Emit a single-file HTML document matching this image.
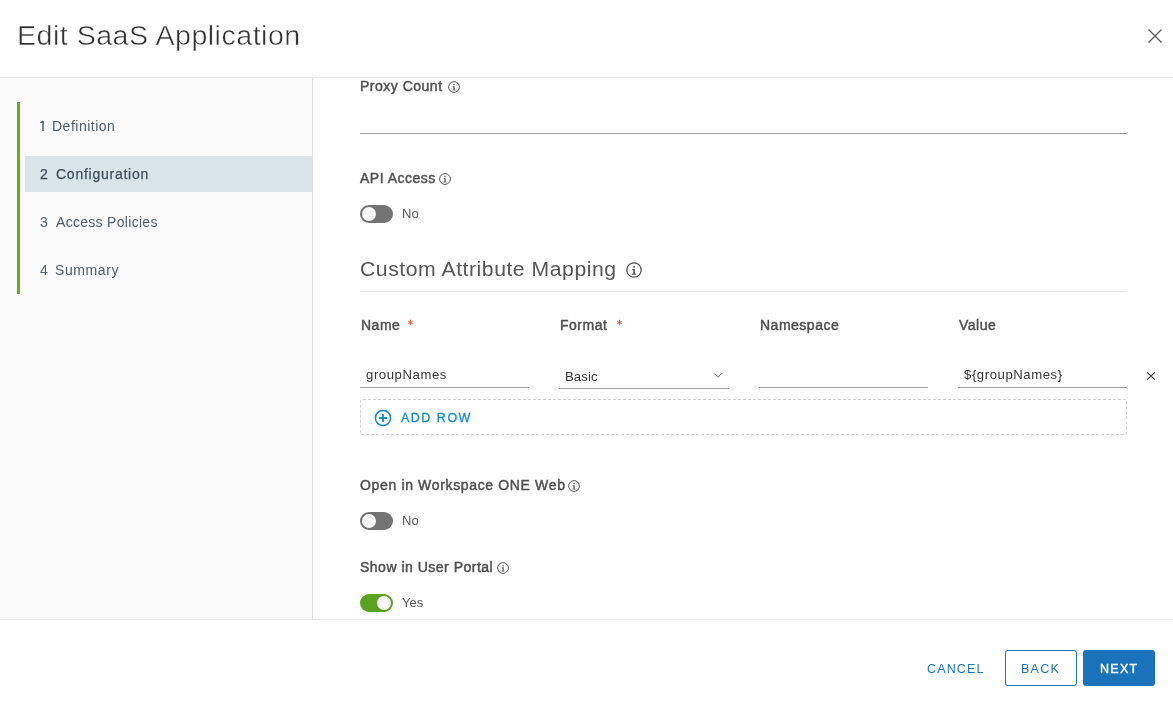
<!DOCTYPE html>
<html><head><meta charset="utf-8">
<style>
*{box-sizing:border-box;margin:0;padding:0}
html,body{width:1173px;height:706px;overflow:hidden;background:#fff;font-family:"Liberation Sans",sans-serif;position:relative}
.a{position:absolute;white-space:nowrap;will-change:transform}
#hline{left:0;top:77px;width:1173px;height:1px;background:#e8e8e8}
#title{left:17px;top:19px;font-size:27px;line-height:34px;color:#333;letter-spacing:0.45px;transform:scaleX(1.06);-webkit-text-stroke:0.45px #fff;transform-origin:0 0}
#close{left:1147px;top:28px;width:16px;height:16px}
#side{left:0;top:78px;width:312px;height:541px;background:#fafafa}
#sline{left:312px;top:78px;width:1px;height:541px;background:#dedede}
#green{left:17px;top:102px;width:3px;height:192px;background:#5fb31a}
#sel{left:25px;top:156px;width:287px;height:36px;background:#d9e4ea}
.step{font-size:14px;line-height:18px;color:#51606b}
#fline{left:0;top:619px;width:1173px;height:1px;background:#e8e9ea}
.lbl{font-size:14px;color:#4f4f4f;line-height:18px;-webkit-text-stroke:0.45px #4f4f4f;letter-spacing:0.5px}
.tog{width:33px;height:18px;border-radius:9px;background:#737373}
.tog .k{position:absolute;top:2px;left:2px;width:14px;height:14px;border-radius:50%;background:#f9f9f9}
.tog.on{background:#5aa220}
.tog.on .k{left:17px}
.tv{font-size:13px;line-height:16px;color:#565656}
.uline{height:1px;background:#9a9a9a}
.inp{font-size:12.5px;line-height:16px;color:#353535;letter-spacing:0.55px;transform:scaleX(1.05);transform-origin:0 0}
.star{font-size:12px;line-height:12px;color:#e12200}
.btn{height:36px;border-radius:3px;font-size:12.5px;letter-spacing:1.6px;text-align:center}
.bt{font-size:12.5px;line-height:16px;letter-spacing:1.6px}
</style></head><body>
<div class="a" id="title">Edit SaaS Application</div>
<svg class="a" id="close" viewBox="0 0 16 16"><path d="M1.5 1.5L14.5 14.5M14.5 1.5L1.5 14.5" stroke="#5a5a5a" stroke-width="1.3"/></svg>
<div class="a" id="hline"></div>

<div class="a" id="side"></div>
<div class="a" id="sline"></div>
<div class="a" id="green"></div>
<div class="a" id="sel"></div>
<svg class="a" style="left:38px;top:118px;width:8px;height:14px" viewBox="0 0 8 14"><path d="M5 3.2V13M2.5 4.9L5 3.1" fill="none" stroke="#51606b" stroke-width="1.45"/></svg><div class="a step" style="left:52px;top:117px;letter-spacing:0.5px">Definition</div>
<div class="a step" style="left:40px;top:165px;color:#3f4d59;-webkit-text-stroke:0.25px #3f4d59">2</div><div class="a step" style="left:56px;top:165px;color:#3f4d59;-webkit-text-stroke:0.25px #3f4d59;letter-spacing:0.75px">Configuration</div>
<div class="a step" style="left:40px;top:213px">3</div><div class="a step" style="left:56px;top:213px;letter-spacing:0.3px">Access Policies</div>
<div class="a step" style="left:40px;top:261px">4</div><div class="a step" style="left:55px;top:261px;letter-spacing:0.6px">Summary</div>

<!-- content -->
<div class="a lbl" style="left:360px;top:77px">Proxy Count</div>
<svg class="a" style="left:447.5px;top:81px;width:12px;height:12px" viewBox="0 0 16 16"><circle cx="8" cy="8" r="7.2" fill="none" stroke="#555" stroke-width="1.3"/><rect x="7.2" y="4" width="1.7" height="1.6" fill="#555"/><path d="M6.2 7h2.7v4.6h1.2v1.2H6v-1.2h1.2V8.2h-1z" fill="#555"/></svg>
<div class="a uline" style="left:360px;top:133px;width:767px"></div>

<div class="a lbl" style="left:360px;top:169px">API Access</div>
<svg class="a" style="left:439px;top:173px;width:12px;height:12px" viewBox="0 0 16 16"><circle cx="8" cy="8" r="7.2" fill="none" stroke="#555" stroke-width="1.3"/><rect x="7.2" y="4" width="1.7" height="1.6" fill="#555"/><path d="M6.2 7h2.7v4.6h1.2v1.2H6v-1.2h1.2V8.2h-1z" fill="#555"/></svg>
<div class="a tog" style="left:360px;top:205px"><div class="k"></div></div>
<div class="a tv" style="left:402px;top:206px">No</div>

<div class="a" style="left:360px;top:257px;font-size:20px;line-height:24px;color:#565656;letter-spacing:0.5px;transform:scaleX(1.06);transform-origin:0 0">Custom Attribute Mapping</div>
<svg class="a" style="left:626px;top:262px;width:16px;height:16px" viewBox="0 0 16 16"><circle cx="8" cy="8" r="7.2" fill="none" stroke="#555" stroke-width="1.3"/><rect x="7.2" y="4" width="1.7" height="1.6" fill="#555"/><path d="M6.2 7h2.7v4.6h1.2v1.2H6v-1.2h1.2V8.2h-1z" fill="#555"/></svg>
<div class="a" style="left:360px;top:291px;width:767px;height:1px;background:#e8e8e8"></div>

<div class="a lbl" style="left:361px;top:316px">Name</div><svg class="a" style="left:406.8px;top:319px;width:7px;height:7px" viewBox="0 0 7 7"><path d="M3.5 0.7V6.3M1.08 2.1L5.92 4.9M1.08 4.9L5.92 2.1" stroke="#d9532e" stroke-width="0.95"/></svg>
<div class="a lbl" style="left:560px;top:316px">Format</div><svg class="a" style="left:615.8px;top:319px;width:7px;height:7px" viewBox="0 0 7 7"><path d="M3.5 0.7V6.3M1.08 2.1L5.92 4.9M1.08 4.9L5.92 2.1" stroke="#d9532e" stroke-width="0.95"/></svg>
<div class="a lbl" style="left:760px;top:316px">Namespace</div>
<div class="a lbl" style="left:959px;top:316px">Value</div>

<div class="a inp" style="left:366px;top:366.5px">groupNames</div>
<div class="a uline" style="left:360px;top:387px;width:169px"></div>
<div class="a inp" style="left:565px;top:369px;letter-spacing:0.1px">Basic</div>
<svg class="a" style="left:713px;top:372px;width:10px;height:7px" viewBox="0 0 10 7"><path d="M1 1.2L5 5.2L9 1.2" fill="none" stroke="#666" stroke-width="0.95"/></svg>
<div class="a uline" style="left:559px;top:388px;width:170px"></div>
<div class="a uline" style="left:759px;top:387px;width:169px"></div>
<div class="a inp" style="left:964px;top:366.5px">${groupNames}</div>
<div class="a uline" style="left:958px;top:387px;width:169px"></div>
<svg class="a" style="left:1146px;top:372px;width:10px;height:8px" viewBox="0 0 10 8"><path d="M1.2 0.3L8.8 7.7M8.8 0.3L1.2 7.7" stroke="#444" stroke-width="1.15"/></svg>

<div class="a" style="left:360px;top:399px;width:767px;height:36px;border:1px dashed #cfcfcf;border-radius:3px"></div>
<svg class="a" style="left:374px;top:409px;width:18px;height:18px" viewBox="0 0 18 18"><circle cx="9" cy="9" r="7.6" fill="none" stroke="#0f8ad0" stroke-width="1.5"/><path d="M9 5v8M5 9h8" stroke="#0f8ad0" stroke-width="1.8"/></svg>
<div class="a bt" style="left:401px;top:410px;color:#0f8ad0;letter-spacing:1.5px;-webkit-text-stroke:0.3px #0f8ad0">ADD ROW</div>

<div class="a lbl" style="left:360px;top:476px;letter-spacing:0.65px">Open in Workspace ONE Web</div>
<svg class="a" style="left:568px;top:480px;width:12px;height:12px" viewBox="0 0 16 16"><circle cx="8" cy="8" r="7.2" fill="none" stroke="#555" stroke-width="1.3"/><rect x="7.2" y="4" width="1.7" height="1.6" fill="#555"/><path d="M6.2 7h2.7v4.6h1.2v1.2H6v-1.2h1.2V8.2h-1z" fill="#555"/></svg>
<div class="a tog" style="left:360px;top:512px"><div class="k"></div></div>
<div class="a tv" style="left:402px;top:513px">No</div>

<div class="a lbl" style="left:360px;top:558px">Show in User Portal</div>
<svg class="a" style="left:497px;top:562px;width:12px;height:12px" viewBox="0 0 16 16"><circle cx="8" cy="8" r="7.2" fill="none" stroke="#555" stroke-width="1.3"/><rect x="7.2" y="4" width="1.7" height="1.6" fill="#555"/><path d="M6.2 7h2.7v4.6h1.2v1.2H6v-1.2h1.2V8.2h-1z" fill="#555"/></svg>
<div class="a tog on" style="left:360px;top:594px"><div class="k"></div></div>
<div class="a tv" style="left:402px;top:595px">Yes</div>

<div class="a" id="fline"></div>
<div class="a bt" style="left:927px;top:661px;color:#1a78bf;letter-spacing:1.15px">CANCEL</div>
<div class="a btn" style="left:1005px;top:650px;width:72px;border:1px solid #1a75bb"></div>
<div class="a bt" style="left:1021px;top:661px;color:#1a75bb;letter-spacing:1.25px">BACK</div>
<div class="a btn" style="left:1083px;top:650px;width:72px;background:#1a73ba"></div>
<div class="a bt" style="left:1100px;top:661px;color:#fff;-webkit-text-stroke:0.4px #fff;letter-spacing:1.3px">NEXT</div>
</body></html>
